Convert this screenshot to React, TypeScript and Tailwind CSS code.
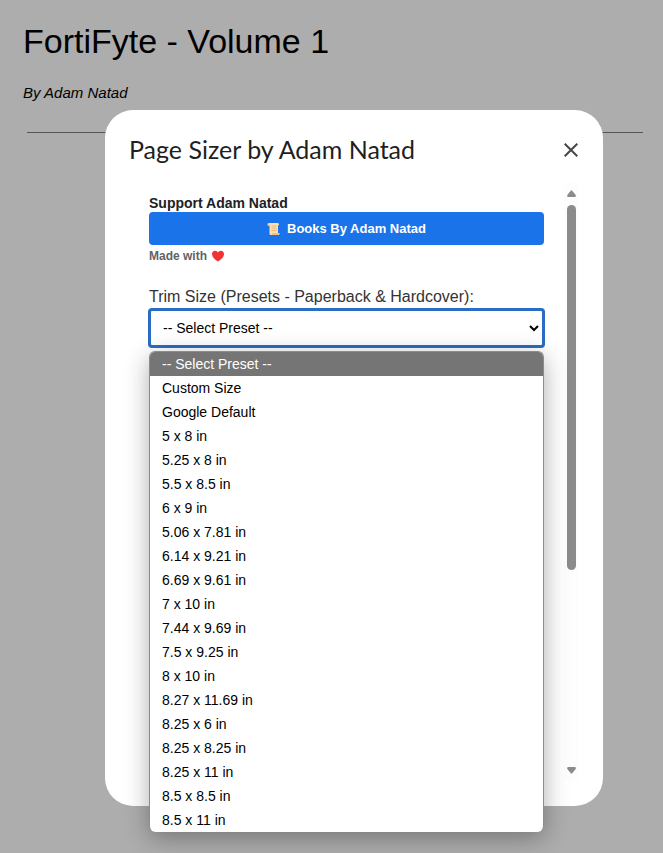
import { useState } from "react";

const PRESETS = [
  "-- Select Preset --",
  "Custom Size",
  "Google Default",
  "5 x 8 in",
  "5.25 x 8 in",
  "5.5 x 8.5 in",
  "6 x 9 in",
  "5.06 x 7.81 in",
  "6.14 x 9.21 in",
  "6.69 x 9.61 in",
  "7 x 10 in",
  "7.44 x 9.69 in",
  "7.5 x 9.25 in",
  "8 x 10 in",
  "8.27 x 11.69 in",
  "8.25 x 6 in",
  "8.25 x 8.25 in",
  "8.25 x 11 in",
  "8.5 x 8.5 in",
  "8.5 x 11 in",
];

function ScrollIcon() {
  return (
    <svg width="14" height="14" viewBox="0 0 14 14" aria-hidden="true">
      <path d="M2 1h8.600a1.500 1.500 0 0 1 .9 2.600H11V11h1.200a1.200 1.200 0 0 1-1 2H4a1.500 1.500 0 0 1-1.500-1.500V3.800H1.600A1.500 1.500 0 0 1 2 1z" fill="#fcdfae" />
      <path d="M2 1a1.400 1.400 0 0 0-.4 2.800h1V2.400M4 13a1.500 1.500 0 0 0 1-2h7.200a1.200 1.200 0 0 1-1 2z" fill="#f0c482" />
      <path d="M4.500 4h5M4.500 6.200h5M4.500 8.400h5" stroke="#deb070" strokeWidth="0.8" />
    </svg>
  );
}

function HeartIcon() {
  return (
    <svg width="14" height="12" viewBox="0 0 14 12" aria-hidden="true">
      <path d="M7 11.500C3.900 9.500 1 7 1 3.900 1 2 2.300.7 4 .7c1.300 0 2.400.7 3 1.800C7.600 1.400 8.700.7 10 .7c1.700 0 3 1.300 3 3.200C13 7 10.100 9.500 7 11.500z" fill="#f03232" />
    </svg>
  );
}

function Scrollbar() {
  return (
    <div className="flex w-[15px] shrink-0 flex-col items-center bg-[#fcfcfc]/60 pt-2 pb-[7px]" aria-hidden="true">
      <svg width="9" height="7" viewBox="0 0 9 7">
        <path d="M3.800.7Q4.500 0 5.200.7L8.700 5Q9.200 7 7.800 7H1.200Q-.2 7 .3 5z" fill="#8b8b8b" />
      </svg>
      <div className="mt-2 w-[9px] grow-[365] basis-0 rounded-full bg-[#8b8b8b]" />
      <div className="grow-[197] basis-0" />
      <svg width="9" height="7" viewBox="0 0 9 7">
        <path d="M3.800 6.300Q4.500 7 5.200 6.300L8.700 2Q9.200 0 7.800 0H1.200Q-.2 0 .3 2z" fill="#8b8b8b" />
      </svg>
    </div>
  );
}

function PresetField() {
  const [preset, setPreset] = useState(PRESETS[0]);
  return (
    <div className="relative mt-5">
      <label htmlFor="preset" className="block text-base leading-6 text-[#333]">
        Trim Size (Presets - Paperback &amp; Hardcover):
      </label>
      <select
        id="preset"
        value={preset}
        onChange={(e) => setPreset(e.target.value)}
        className="block h-[38px] w-full rounded-[3px] border-2 border-[#296dc4] bg-white px-2 text-sm text-black ring-1 ring-[#296dc4] outline-none"
      >
        {PRESETS.map((p) => (
          <option key={p}>{p}</option>
        ))}
      </select>
      <ul
        role="listbox"
        aria-label="Trim size presets"
        className="absolute top-full right-0 left-0 mt-1 overflow-hidden rounded-md border-x border-t border-[#8c8c8c] bg-white text-sm leading-6 text-black shadow-[0_6px_24px_rgba(0,0,0,0.32)]"
      >
        {PRESETS.map((p) => (
          <li
            key={p}
            role="option"
            aria-selected={p === preset}
            onClick={() => setPreset(p)}
            className="cursor-default px-3 aria-selected:bg-[#757575] aria-selected:text-white"
          >
            {p}
          </li>
        ))}
      </ul>
    </div>
  );
}

function Dialog() {
  return (
    <section
      role="dialog"
      aria-labelledby="dialog-title"
      className="flex h-[696px] w-full flex-col rounded-[28px] bg-white pr-6 pb-[25px] pl-6"
    >
      <header className="flex h-[72px] shrink-0 items-center justify-between pt-2">
        <h2 id="dialog-title" className="pb-0.5 font-['Lato',sans-serif] text-[25px] leading-8 text-[#1f1f1f]">
          Page Sizer by Adam Natad
        </h2>
        <button type="button" aria-label="Close" className="flex h-8 w-4 items-center justify-center">
          <svg width="14" height="14" viewBox="0 0 14 14" fill="none" stroke="#444746" strokeWidth="2" className="shrink-0">
            <path d="M.7.7l12.600 12.600M13.300.7L.7 13.300" />
          </svg>
        </button>
      </header>
      <div className="flex min-h-0 grow gap-5">
        <div className="grow pt-3 pl-5">
          <h3 className="text-sm leading-[18px] font-bold text-[#202124]">Support Adam Natad</h3>
          <a
            href="#books"
            className="flex h-[33px] items-center justify-center gap-1.5 rounded bg-[#1a73e8] text-[13px] font-bold text-white"
          >
            <ScrollIcon />
            Books By Adam Natad
          </a>
          <p className="mt-0.5 flex items-center gap-1 text-xs leading-[18px] font-bold text-[#5f6368]">
            Made with
            <HeartIcon />
          </p>
          <PresetField />
        </div>
        <Scrollbar />
      </div>
    </section>
  );
}

export default function App() {
  return (
    <div className="relative min-h-screen overflow-hidden bg-[#adadad] font-['Liberation_Sans',Arial,sans-serif] text-black">
      <main className="px-[23px] pt-5">
        <h1 className="text-[34px] leading-[42px]">FortiFyte - Volume 1</h1>
        <p className="mt-[21px] text-[15px] leading-5 italic">By Adam Natad</p>
        <hr className="mt-[29px] mr-[-3px] ml-1 border-[#555]" />
      </main>
      <div className="absolute inset-0 pt-[110px] pr-[60px] pl-[105px]">
        <Dialog />
      </div>
    </div>
  );
}
